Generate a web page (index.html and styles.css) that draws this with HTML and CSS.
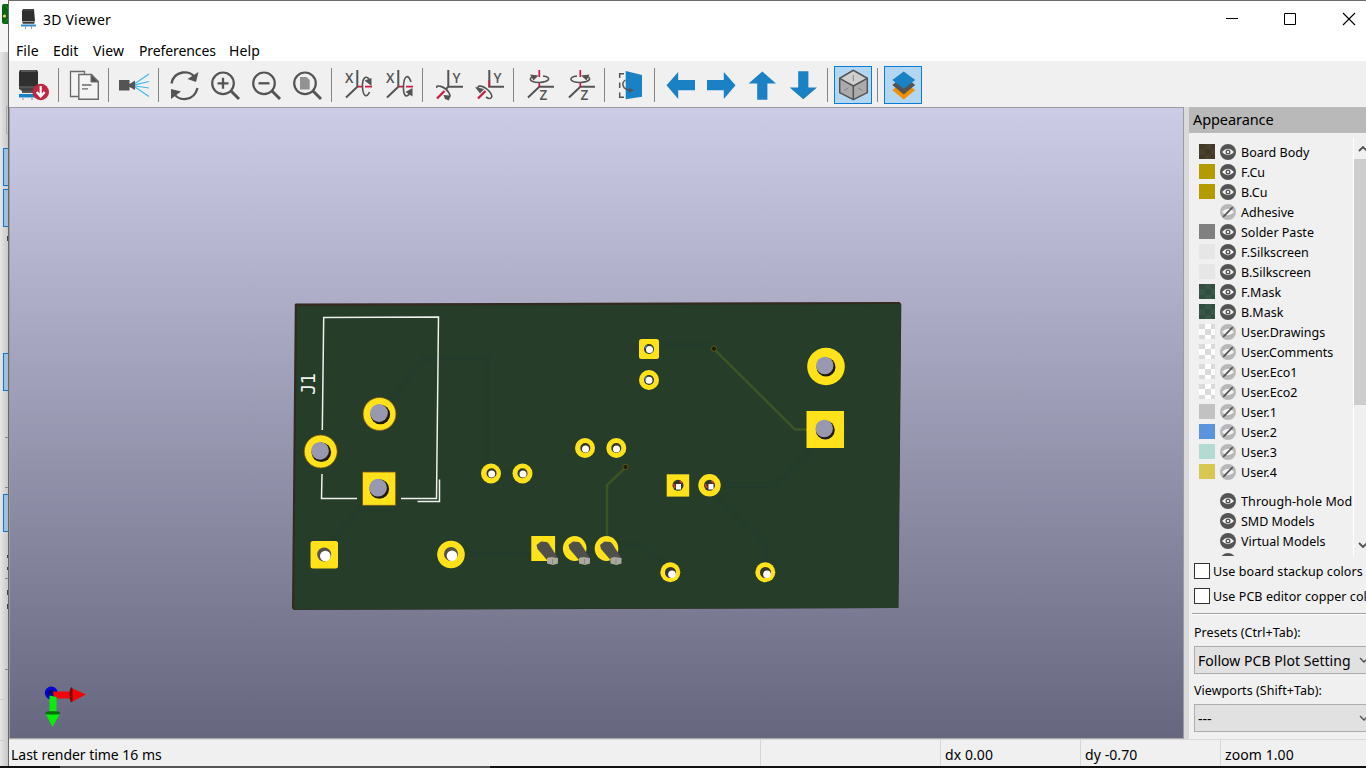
FILE: index.html
```html
<!DOCTYPE html>
<html lang="en">
<head>
<meta charset="utf-8">
<title>3D Viewer</title>
<link rel="stylesheet" href="styles.css">
</head>
<body>
<svg class="defs" width="0" height="0">
  <defs>
    <symbol id="eye" viewBox="0 0 16 16"><circle cx="8" cy="8" r="8" fill="#545454"/><path d="M2 8Q8 1.4 14 8Q8 14.6 2 8Z" fill="#f4f4f4"/><circle cx="8" cy="8" r="2.500" fill="#545454"/><rect x="7" y="7" width="2" height="2" fill="#eee"/></symbol>
    <symbol id="hid" viewBox="0 0 16 16"><circle cx="8" cy="8" r="8" fill="#b8b8b8"/><path d="M2 8Q8 1.4 14 8Q8 14.6 2 8Z" fill="#f3f3f3"/><path d="M3.200 12.800L12.800 3.200" stroke="#545454" stroke-width="1.700"/></symbol>
    <symbol id="chev" viewBox="0 0 10 6"><path d="M1 1L5 5L9 1" fill="none" stroke="#505050" stroke-width="1.400"/></symbol>
  </defs>
</svg>
<div class="screen">
  <div class="behind">
    <svg viewBox="0 0 9 768" width="9" height="768">
      <rect width="9" height="52" fill="#f5f5f5"/><rect x="2" y="4" width="9" height="20" rx="2" fill="#0b6414"/><path d="M5 5L9 10M4 23L9 18" stroke="#168f20"/><circle cx="4.500" cy="16" r="1.600" fill="#f0d070"/>
      <path d="M9 106.500H6.500V133.500H9" stroke="#aaa" fill="none"/>
      <g fill="#9fc1de" stroke="#1277c8"><rect x="3.500" y="148.500" width="8" height="37"/><rect x="3.500" y="189.500" width="8" height="37"/><rect x="3.500" y="353.500" width="8" height="37"/><rect x="3.500" y="494.500" width="8" height="37"/></g>
      <path d="M5 437.500H9M5 487.500H9M5 578.500H9M5 669.500H9" stroke="#888"/><path d="M0 699.500H9M0 740.500H9" stroke="#ccc"/><path d="M7.500 236V241M7.500 555V558M7.500 567V570M7.500 590V595M7.500 604V609" stroke="#444"/>
    </svg>
  </div>
  <div class="window">
    <header class="title">
      <svg class="logo" viewBox="0 0 16 20" width="16" height="20"><path d="M2 0H13L14 12H1L1 2Z" fill="#303030"/><path d="M2 1H13" stroke="#555"/><path d="M1 12.500H14L13 15H2Z" fill="#3c3c3c"/><path d="M2 14.800H13" stroke="#aaa" stroke-width=".6"/><rect y="15.500" width="15" height="2" fill="#368fcf"/><path d="M4.500 17V20M10.500 17V20" stroke="#999"/></svg>
      <span class="name">3D Viewer</span>
      <svg class="controls" viewBox="1220 8 146 24" width="146" height="24" fill="none" stroke="#000"><path d="M1226 18.500H1238M1284.500 13.500H1295.500V24.500H1284.500Z"/><path d="M1343 13L1355 25M1355 13L1343 25" stroke-width="1.100"/></svg>
    </header>
    <nav class="menu"><span class="m1">File</span><span class="m2">Edit</span><span class="m3">View</span><span class="m4">Preferences</span><span class="m5">Help</span></nav>
    <div class="toolbar">
      <svg class="tool" viewBox="13 61 41 46"><path d="M20 70H37L38 72V87H19V72Z" fill="#2f2f2f"/><path d="M21 71H36" stroke="#666" stroke-width="1.500"/><path d="M19 86.500H38V89L35 91H22L19 89Z" fill="#444"/><path d="M19 87H38" stroke="#777" stroke-width=".7"/><path d="M22 92H36" stroke="#222" stroke-width="1.500"/><path d="M19 95.700H38" stroke="#1a81c4" stroke-width="3.500"/><path d="M23 98V100M32 98V100" stroke="#888"/><circle cx="40.700" cy="92" r="8.300" fill="#bf2641"/><path d="M40.700 86V95M36.700 92L40.700 96.500L44.700 92" fill="none" stroke="#fff" stroke-width="2.200"/></svg>
      <i class="sep"></i>
      <svg class="tool" viewBox="63 61 41 46" stroke="#6a6a6a" fill="#f4f4f4"><path d="M70.500 71.500H84.500V96.500H70.500Z" stroke-width="1.300"/><path d="M78.800 74.500H91.500L98.300 81.500V99.300H78.800Z" stroke-width="1.400"/><path d="M91 74.500V82H98.500Z" fill="#545454"/><path d="M82 85H91.500M82 88.800H88" stroke-width="1.300"/></svg>
      <i class="sep"></i>
      <svg class="tool" viewBox="113 61 41 46"><path d="M119 80H129.500V84L135 80.500V90L129.500 87V90.500H119Z" fill="#545454"/><path d="M135 83.500L149 74M135 84.800L149 81.500M135 86L149 88M135 87L149 96.500" stroke="#42b8eb" stroke-width="1.200"/></svg>
      <i class="sep"></i>
      <svg class="tool" viewBox="163 61 41 46" fill="none" stroke="#545454" stroke-width="2.300"><path d="M171.500 83.500C174 70.500 190 69 195.500 78M197.500 88C194 101.500 179 102 173.500 93"/><path d="M198.500 72L196 82L187.500 79Z M171 99V89L181 91.500Z" fill="#545454" stroke="none"/></svg>
      <svg class="tool" viewBox="204 61 41 46" fill="none" stroke="#545454"><circle cx="223" cy="83.300" r="10.800" stroke-width="2.200"/><path d="M231 91L239 99" stroke-width="3"/><path d="M217.500 83.300H228.500M223 77.800V88.800" stroke-width="2.300"/></svg>
      <svg class="tool" viewBox="245 61 41 46" fill="none" stroke="#545454"><circle cx="264" cy="83.300" r="10.800" stroke-width="2.200"/><path d="M272 91L280 99" stroke-width="3"/><path d="M258.500 83.300H269.500" stroke-width="2.300"/></svg>
      <svg class="tool" viewBox="286 61 41 46" fill="none" stroke="#545454"><path d="M300 77H306.500L309.700 80V89.500H300Z" fill="#929292" stroke="none"/><circle cx="305" cy="83.300" r="10.800" stroke-width="2.200"/><path d="M313 91L321 99" stroke-width="3"/></svg>
      <i class="sep"></i>
      <svg class="tool axis" viewBox="336 61 41 46"><path d="M357.300 70V86.700L346 97.500"/><path class="red" d="M358 86.700H362M365 86.700H372"/><path class="loop" d="M369.500 92C367 98 363 97 362.500 87C362 78 366 75 369 79"/><path class="tip" d="M364.500 80.500L371.500 78V86Z"/><text x="345" y="82.500">X</text></svg>
      <svg class="tool axis" viewBox="377 61 41 46"><path d="M398.300 70V86.700L387 97.500"/><path class="red" d="M399 86.700H403M406 86.700H413"/><path class="loop" d="M411 82C408 73 404 76 403.500 86C403 97 407 98 410 93"/><path class="tip" d="M405.500 92L412.500 88V96.500Z"/><text x="386" y="82.500">X</text></svg>
      <i class="sep"></i>
      <svg class="tool axis" viewBox="427 61 41 46"><path d="M448.300 70V86.700H463M448.300 86.700L445.500 89.500"/><path class="red wide" d="M444.500 91L437 98.500"/><path class="loop" d="M437 88C435 84 445 86 449 93C451 96 450 98 447 98"/><path class="tip" d="M443.500 95L450 95.500L449 100.500L445 99Z"/><text x="452.500" y="82.500">Y</text></svg>
      <svg class="tool axis" viewBox="468 61 41 46"><path d="M489.300 70V86.700H504"/><path class="red" d="M489.300 80V87"/><path class="red wide" d="M485.500 91L478 98.500"/><path class="loop" d="M480 91C474 85 482 84 489 91C495 98 490 100 486 97"/><path class="tip" d="M475 87L484 89L480 93.500Z"/><text x="493.500" y="82.500">Y</text></svg>
      <i class="sep"></i>
      <svg class="tool axis" viewBox="518 61 41 46"><path d="M554 86.700H539.300L528 97.500"/><path class="red" d="M539.300 70V77M539.300 82V87"/><path class="loop" d="M536 76C528 77 528 82 539 82.500C550 82 552 77 543 76"/><path class="tip" d="M530 74.500L538.500 75.500L533.500 80.500Z"/><text x="539.500" y="100">Z</text></svg>
      <svg class="tool axis" viewBox="559 61 41 46"><path d="M595 86.700H580.300L569 97.500"/><path class="red" d="M580.300 70V77M580.300 82V87"/><path class="loop" d="M577 76C568 77 569 82 580 82.500C591 82 593 77 584 76"/><path class="tip" d="M589.500 74.500L581 75.500L586.500 80.500Z"/><text x="580.500" y="100">Z</text></svg>
      <i class="sep"></i>
      <svg class="tool" viewBox="609 61 41 46" fill="none" stroke="#545454" stroke-width="1.500"><path d="M625.700 71L642 75V96.700L625.700 99.300Z" fill="#1a81c4" stroke="none"/><path d="M624 73.700H619.700V78M619.700 82.500V88M619.700 92.500V97.300H624"/><path d="M625.500 80C621 83 622 89.500 631 90.500"/><path d="M629 87.800L634 90.500L629 92.500Z" fill="#545454" stroke="none"/></svg>
      <i class="sep"></i>
      <svg class="tool move" viewBox="659 61 41 46"><path d="M666.500 85.300L678.200 72V80H695V90.300H678.200V99Z"/></svg>
      <svg class="tool move" viewBox="700 61 41 46"><path d="M735.500 85.300L723.800 72V80H707V90.300H723.800V99Z"/></svg>
      <svg class="tool move" viewBox="741 61 41 46"><path d="M762.300 71.500L776 83.400H767.400V99.700H757.200V83.400H748.600Z"/></svg>
      <svg class="tool move" viewBox="782 61 41 46"><path d="M803.300 99.300L817 87.500H808.400V71.300H798.200V87.500H789.600Z"/></svg>
      <i class="sep"></i>
      <svg class="toggle" viewBox="835 67 36 36" stroke="#545454" stroke-width="1.500" stroke-linejoin="round"><path d="M853.300 70.300L867.300 78.300V92.700L853.300 99.700L839.700 92.700V78.300Z" fill="#ababab"/><path d="M853.300 70.300L867.300 78.300L853.300 86L839.700 78.300Z" fill="#cfcfcf"/><path d="M853.300 86V99.700"/><path d="M853.300 75V81M844 90.500L848.500 88M858 88L862.500 90.500" stroke="#777" stroke-width=".8"/></svg>
      <i class="sep"></i>
      <svg class="toggle" viewBox="885 67 36 36"><path d="M892.300 90L896 87.500L903.700 93L911.500 87.500L915.200 90L903.700 99.500Z" fill="#f29100"/><path d="M892.300 85L896 82L903.700 87L911.500 82L915.200 85L903.700 94.500Z" fill="#545454"/><path d="M892.300 80L903.700 71.500L915.200 80L903.700 88.700Z" fill="#1a81c4"/></svg>
    </div>
    <main class="content">
      <div class="canvas">
        <svg viewBox="10 108 1173 630" width="1173" height="630">
          <path d="M296 303.500L899.500 302L901.300 304L898.500 608L293.500 610L292 608L294.800 304Z" fill="#33291f"/>
          <path d="M297 306L901 304L898 608L294 609.500Z" fill="#253d29"/>
          <g fill="none" stroke="#233c2b" stroke-width="5"><path d="M380 413L425 358H487V465M325 550L360 508M650 345H713M710 485H775L825 437M710 490L765 543V570M455 554H530M610 545H640L670 567M491 473H521M585 447H616"/></g>
          <g fill="none" stroke="#3d5325" stroke-width="2.500"><path d="M714 349L795 429.500H807M626 467L607 485V540"/></g>
          <g fill="#201e0b" stroke="#5b5b16"><circle cx="714" cy="348.700" r="2.700"/><circle cx="625.500" cy="467" r="2.700"/></g>
          <g fill="none" stroke="#eef1ee" stroke-width="1.500"><path d="M322.300 430L323.700 317.500L438.500 317L436.500 498.500H401M322 474L321.500 498.500H357M439.500 479.500V501.500H417.500"/></g>
          <text class="ref" transform="translate(315 395) rotate(-90)">J1</text>
          <g fill="#ffe21a">
            <g stroke="#79521c" stroke-width=".8"><circle cx="379.500" cy="414" r="16.500"/><circle cx="320.700" cy="451.500" r="16.500"/><rect x="362.500" y="472" width="33.200" height="33.300"/></g>
            <circle cx="826" cy="366.500" r="18.800"/><rect x="806.500" y="411" width="37.500" height="37"/>
            <rect x="310.500" y="541" width="27.500" height="27.500" rx="2.500"/><circle cx="451" cy="554.500" r="13.800"/>
            <rect x="639" y="339" width="20" height="20" rx="2.500"/><circle cx="649" cy="380" r="10"/>
            <circle cx="491" cy="473.500" r="10"/><circle cx="522.500" cy="473.500" r="10"/><circle cx="585" cy="448" r="10"/><circle cx="616.300" cy="448" r="10"/>
            <rect x="666.700" y="474.300" width="22.500" height="22.300"/><circle cx="709.500" cy="485.300" r="11.200"/>
            <circle cx="670.300" cy="572.200" r="10"/><circle cx="765.300" cy="572.200" r="10"/>
            <rect x="531.300" y="536" width="23.800" height="25"/><ellipse cx="574.700" cy="548.500" rx="11.800" ry="12.500"/><ellipse cx="606.500" cy="548.500" rx="11.800" ry="12.500"/>
          </g>
          <g fill="#201b03"><circle cx="380.300" cy="414.500" r="9.800"/><circle cx="321.300" cy="452.300" r="9.800"/><circle cx="379.300" cy="489" r="9.800"/><circle cx="826" cy="367" r="9.500"/><circle cx="825.300" cy="430" r="9.500"/></g>
          <g fill="#9998b1"><circle cx="379" cy="413" r="8.900"/><circle cx="320" cy="450.800" r="8.900"/><circle cx="378" cy="487.700" r="8.900"/><circle cx="824.800" cy="365.500" r="8.700"/><circle cx="824.200" cy="428.500" r="8.700"/></g>
          <g fill="#55524b"><circle cx="324.200" cy="554.500" r="7"/><circle cx="451" cy="554" r="7"/></g>
          <g fill="#35352f"><circle cx="649" cy="349" r="5"/><circle cx="649" cy="380" r="5"/><circle cx="491.500" cy="473.300" r="5"/><circle cx="522.500" cy="473.300" r="5"/><circle cx="585.300" cy="448" r="5"/><circle cx="616.300" cy="448" r="5"/><circle cx="678" cy="485.300" r="5.500"/><circle cx="709.500" cy="485.300" r="5.500"/><circle cx="670.500" cy="572.500" r="5.500"/><circle cx="765.500" cy="572.500" r="5.500"/></g>
          <g fill="#fff"><circle cx="325.300" cy="556" r="5.300"/><circle cx="452" cy="555.800" r="5.300"/><circle cx="649.500" cy="349.500" r="3.500"/><circle cx="649" cy="380.300" r="3.500"/><circle cx="491.700" cy="474" r="3.500"/><circle cx="523" cy="474" r="3.500"/><circle cx="585.500" cy="449" r="3.500"/><circle cx="616.500" cy="449" r="3.500"/><rect x="676" y="484" width="5" height="5.500"/><rect x="708.500" y="484" width="5" height="5.500"/><circle cx="672" cy="574.200" r="3.800"/><circle cx="767" cy="574.200" r="3.800"/></g>
          <path d="M673.500 484L675 488M680 481L682 483M705 484L707 488M711.500 481L713.500 483" stroke="#e34028" stroke-width="1.500"/>
          <path d="M645 348L647 345.500M645 379L647 376.500" stroke="#448cc6" stroke-width="1.300"/>
          <g id="pin"><path d="M536.500 545L541 541.500L547 542L549 544L557.500 557.500L547 560L537.500 549Z" fill="#514f49"/><path d="M547 558L551 557L558 558V563.500L553 565L547 563.500Z" fill="#aaa9a0"/><path d="M552.500 559V564" stroke="#8c8b83"/></g><use href="#pin" x="32"/><use href="#pin" x="63.500"/>
          <circle cx="51.300" cy="693" r="6.500" fill="#0002d4"/><circle cx="51" cy="693" r="3.300" fill="#000077"/>
          <path d="M53 691.500H71V698.500H54Z" fill="#f40505"/><ellipse cx="71.500" cy="694.700" rx="2" ry="7.500" fill="#750000"/><path d="M72.500 688.500L86 694.500L72.500 701.500Z" fill="#f40505"/>
          <path d="M49.500 695.500L56.500 697V713H49.500Z" fill="#08ed0b"/><ellipse cx="52.700" cy="713" rx="7.500" ry="2" fill="#006f00"/><path d="M46 714.500H59.500L52.500 727Z" fill="#08ed0b"/>
        </svg>
      </div>
      <aside class="panel">
        <h2 class="head">Appearance</h2>
        <div class="listwrap">
          <div class="list">
            <div class="row"><i class="sw body"></i><svg class="vis"><use href="#eye"/></svg><span>Board Body</span></div>
            <div class="row"><i class="sw cu"></i><svg class="vis"><use href="#eye"/></svg><span>F.Cu</span></div>
            <div class="row"><i class="sw cu"></i><svg class="vis"><use href="#eye"/></svg><span>B.Cu</span></div>
            <div class="row"><i class="sw"></i><svg class="vis"><use href="#hid"/></svg><span>Adhesive</span></div>
            <div class="row"><i class="sw paste"></i><svg class="vis"><use href="#eye"/></svg><span>Solder Paste</span></div>
            <div class="row"><i class="sw silk"></i><svg class="vis"><use href="#eye"/></svg><span>F.Silkscreen</span></div>
            <div class="row"><i class="sw silk"></i><svg class="vis"><use href="#eye"/></svg><span>B.Silkscreen</span></div>
            <div class="row"><i class="sw mask"></i><svg class="vis"><use href="#eye"/></svg><span>F.Mask</span></div>
            <div class="row"><i class="sw mask"></i><svg class="vis"><use href="#eye"/></svg><span>B.Mask</span></div>
            <div class="row"><i class="sw check"></i><svg class="vis"><use href="#hid"/></svg><span>User.Drawings</span></div>
            <div class="row"><i class="sw check"></i><svg class="vis"><use href="#hid"/></svg><span>User.Comments</span></div>
            <div class="row"><i class="sw check"></i><svg class="vis"><use href="#hid"/></svg><span>User.Eco1</span></div>
            <div class="row"><i class="sw check"></i><svg class="vis"><use href="#hid"/></svg><span>User.Eco2</span></div>
            <div class="row"><i class="sw u1"></i><svg class="vis"><use href="#hid"/></svg><span>User.1</span></div>
            <div class="row"><i class="sw u2"></i><svg class="vis"><use href="#hid"/></svg><span>User.2</span></div>
            <div class="row"><i class="sw u3"></i><svg class="vis"><use href="#hid"/></svg><span>User.3</span></div>
            <div class="row"><i class="sw u4"></i><svg class="vis"><use href="#hid"/></svg><span>User.4</span></div>
            <div class="row models"><i class="sw"></i><svg class="vis"><use href="#eye"/></svg><span>Through-hole Mod</span></div>
            <div class="row"><i class="sw"></i><svg class="vis"><use href="#eye"/></svg><span>SMD Models</span></div>
            <div class="row"><i class="sw"></i><svg class="vis"><use href="#eye"/></svg><span>Virtual Models</span></div>
            <div class="row"><i class="sw"></i><svg class="vis"><use href="#eye"/></svg></div>
          </div>
          <div class="scroll"><svg class="up" viewBox="0 0 10 6"><path d="M1 5L5 1L9 5" fill="none" stroke="#505050" stroke-width="1.800"/></svg><div class="thumb"></div><svg class="down" viewBox="0 0 10 6"><path d="M1 1L5 5L9 1" fill="none" stroke="#505050" stroke-width="1.800"/></svg></div>
        </div>
        <div class="opt"><i class="box"></i><span>Use board stackup colors</span></div>
        <div class="opt"><i class="box"></i><span>Use PCB editor copper col</span></div>
        <div class="rule"></div>
        <div class="label">Presets (Ctrl+Tab):</div>
        <div class="combo"><span>Follow PCB Plot Setting</span><svg><use href="#chev"/></svg></div>
        <div class="label second">Viewports (Shift+Tab):</div>
        <div class="combo"><span>---</span><svg><use href="#chev"/></svg></div>
      </aside>
    </main>
    <footer class="status"><span class="s0">Last render time 16 ms</span><span class="s1"></span><span class="s2">dx 0.00</span><span class="s3">dy -0.70</span><span class="s4">zoom 1.00</span></footer>
  </div>
  <div class="taskbar"><i></i></div>
</div>
</body>
</html>
```
FILE: styles.css
```css
* { box-sizing: border-box; }
body { margin: 0; width: 1366px; height: 768px; overflow: hidden; font: 14px "Noto Sans", "Open Sans", sans-serif; color: #000; }
.defs { position: absolute; }
.screen { width: 1366px; height: 768px; display: grid; grid-template: 766px 2px / 9px 1357px; overflow: hidden; }
.behind { background: linear-gradient(90deg, #e6e6e6, #c8c8c8); border-right: 1px solid #666; overflow: hidden; }
.behind svg { display: block; }
.window { border-top: 1px solid #6c6c6c; background: #f0f0f0; display: flex; flex-direction: column; overflow: hidden; }
.title { height: 37px; background: #fff; display: flex; align-items: center; flex: none; }
.logo { margin: 0 0 2px 12px; }
.name { margin-left: 6px; flex: 1; letter-spacing: .2px; }
.controls { flex: none; margin-top: 1px; }
.menu { height: 23px; background: #fff; display: flex; align-items: flex-start; padding: 1px 0 0 7px; flex: none; line-height: 23px; }
.menu span { flex: none; white-space: nowrap; letter-spacing: .1px; }
.m1 { width: 37px; }
.m2 { width: 40px; }
.m3 { width: 46px; }
.menu .m4 { width: 90px; letter-spacing: -.1px; }
.toolbar { height: 46px; flex: none; display: flex; padding-left: 4px; }
.tool { width: 41px; height: 46px; flex: none; }
.sep { width: 9px; height: 34px; flex: none; margin-top: 7px; background: linear-gradient(#858585, #858585) 4px 0 / 1px 100% no-repeat; }
.axis path { fill: none; stroke: #545454; stroke-width: 2; }
.axis .red { stroke: #cc1b43; stroke-width: 1.7; }
.axis .wide { stroke-width: 2.3; }
.axis .loop { stroke-width: 1.6; }
.axis .tip { fill: #545454; stroke: none; }
.axis text { font: 600 13.5px "Open Sans", sans-serif; fill: #545454; }
.move { fill: #1a81c4; }
.toggle { width: 38px; height: 38px; flex: none; margin: 5px 1px 0 2px; background: #b3d6f3; border: 1px solid #0a7cd6; }
.content { height: 632px; display: grid; grid-template-columns: 1175px 182px; flex: none; }
.canvas { border: 1px solid #9b9ba1; border-bottom-color: #aaa; background: linear-gradient(#cccce6, #66667f); overflow: hidden; }
.canvas svg { display: block; }
.ref { font: 19px "DejaVu Sans Mono", monospace; letter-spacing: -1px; fill: #f0f2f0; }
.panel { border-left: 5px solid #dadada; overflow: hidden; font-size: 12.5px; }
.head { margin: 0; height: 26px; background: #b9b9b9; font-size: 14.5px; font-weight: 400; line-height: 25px; padding-left: 4px; letter-spacing: -.08px; }
.listwrap { height: 423px; display: flex; padding-top: 5px; }
.list { width: 164px; padding: 4px 0 0 10px; flex: none; overflow: hidden; }
.row { height: 20px; display: flex; align-items: center; line-height: 20px; white-space: nowrap; }
.models { margin-top: 9px; }
.row span { padding-top: 2px; }
.models span { letter-spacing: .1px; }
.sw { width: 16px; height: 15px; margin: 0 5px 1px 0; flex: none; }
.vis { width: 16px; height: 16px; margin-right: 5px; flex: none; }
.body { background: repeating-conic-gradient(#413925 0 25%, #483f2c 0 50%) 0 5px / 12px 12px; }
.cu { background: #b29c00; }
.paste { background: #808080; }
.silk { background: #e6e6e6; }
.mask { background: repeating-conic-gradient(#314e40 0 25%, #3a5848 0 50%) 0 5px / 12px 12px; }
.check { background: repeating-conic-gradient(#dadada 0 25%, #fff 0 50%) 0 5px / 12px 12px; }
.u1 { background: #c2c2c2; }
.u2 { background: #5994dc; }
.u3 { background: #b4dbd2; }
.u4 { background: #d8c852; }
.scroll { width: 26px; flex: none; border-left: 1px solid #fff; }
.up, .down { display: block; width: 10px; height: 6px; margin: 8px 0 7px 4px; }
.thumb { height: 246px; background: #cdcdcd; }
.down { margin: 137px 0 0 4px; }
.opt { display: flex; height: 25px; padding: 7px 0 0 5px; line-height: 17px; white-space: nowrap; letter-spacing: .08px; }
.box { width: 16px; height: 16px; border: 1px solid #333; background: #fff; margin-right: 3px; flex: none; }
.rule { margin: 7px 0 0 3px; height: 2px; border-top: 1px solid #a0a0a0; border-bottom: 1px solid #fff; }
.label { height: 31px; padding: 8px 0 0 5px; line-height: 20px; letter-spacing: .05px; }
.second { height: 30px; padding-top: 7px; }
.combo { margin-left: 5px; width: 190px; height: 28px; border: 1px solid #adadad; background: #e1e1e1; font-size: 14px; line-height: 26px; display: flex; align-items: center; padding-left: 3px; }
.combo span { width: 153px; padding-top: 2px; letter-spacing: .04px; overflow: hidden; white-space: nowrap; }
.combo svg { width: 10px; height: 6px; margin-left: 8px; flex: none; }
.status { flex: 1; border-top: 1px solid #dadada; display: grid; grid-template-columns: 751px 180px 140px 140px 146px; line-height: 28px; }
.status span { border-left: 1px solid #d7d7d7; padding: 1px 0 0 4px; height: 26px; white-space: nowrap; letter-spacing: .08px; }
.status .s0 { border: 0; padding-left: 2px; letter-spacing: -.03px; }
.taskbar { grid-column: 1 / 3; background: #111; padding-left: 60px; }
.taskbar i { display: block; width: 430px; height: 2px; background: #555; }
```
